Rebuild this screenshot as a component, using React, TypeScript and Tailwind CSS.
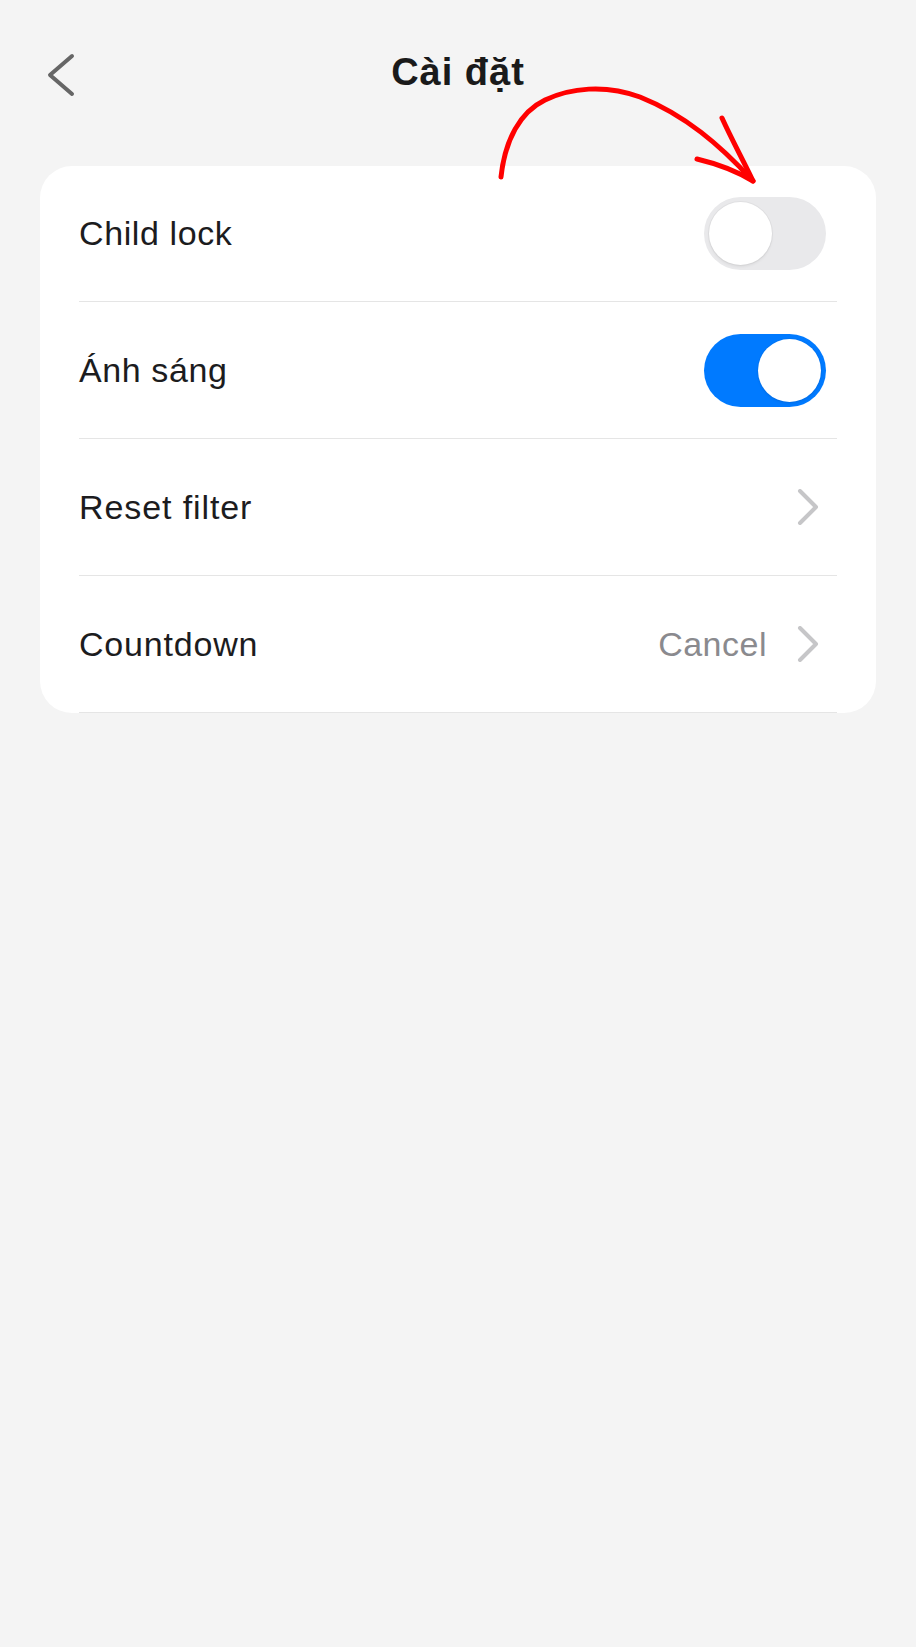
import { useState } from "react";

function Toggle({ on, onChange }: { on: boolean; onChange: () => void }) {
    return (
        <button
            type="button"
            onClick={onChange}
            className={`relative block w-[122px] h-[73px] rounded-full shrink-0 ${on ? "bg-[#007aff]" : "bg-[#e9e9eb]"}`}
        >
            <span
                className={`absolute top-[5px] w-[63px] h-[63px] rounded-full bg-white shadow-[0_0_0_1px_rgba(0,0,0,0.04),0_2px_3px_rgba(0,0,0,0.06)] ${on ? "left-[54px]" : "left-[5px]"}`}
            />
        </button>
    );
}

function Chevron() {
    return (
        <svg width="22" height="36" viewBox="0 0 22 36" className="block shrink-0">
            <polyline
                points="3,2 19,18 3,34"
                fill="none"
                stroke="#c6c6c8"
                strokeWidth="4"
                strokeLinecap="round"
                strokeLinejoin="round"
            />
        </svg>
    );
}

export default function App() {
    const [childLock, setChildLock] = useState(false);
    const [light, setLight] = useState(true);

    return (
        <div
            className="relative min-h-[1647px] w-full bg-[#f4f4f4] text-[#1c1c1e]"
            style={{ fontFamily: '"Liberation Sans", Arial, sans-serif' }}
        >
            {/* header */}
            <div className="relative flex items-center justify-center h-[144px]">
                <button type="button" className="absolute left-[45px] top-[53px]">
                    <svg width="32" height="44" viewBox="0 0 32 44" className="block">
                        <polyline
                            points="27,3 5,22 27,41"
                            fill="none"
                            stroke="#666666"
                            strokeWidth="4"
                            strokeLinecap="round"
                            strokeLinejoin="round"
                        />
                    </svg>
                </button>
                <h1 className="text-[38px] font-bold text-[#1a1a1a] tracking-[1px]">Cài đặt</h1>
            </div>

            {/* settings card */}
            <div className="mx-[40px] mt-[22px] bg-white rounded-[32px] px-[39px]">
                <div className="flex items-center justify-between h-[136px] border-b border-[#e5e5e5]">
                    <span className="text-[34px] tracking-[0.6px]">Child lock</span>
                    <div className="flex pr-[11px]">
                        <Toggle on={childLock} onChange={() => setChildLock(!childLock)} />
                    </div>
                </div>
                <div className="flex items-center justify-between h-[137px] border-b border-[#e5e5e5]">
                    <span className="text-[34px] tracking-[0.6px]">Ánh sáng</span>
                    <div className="flex pr-[11px]">
                        <Toggle on={light} onChange={() => setLight(!light)} />
                    </div>
                </div>
                <div className="flex items-center justify-between h-[137px] border-b border-[#e5e5e5]">
                    <span className="text-[34px] tracking-[0.9px]">Reset filter</span>
                    <div className="flex pr-[18px]">
                        <Chevron />
                    </div>
                </div>
                <div className="flex items-center justify-between h-[137px] border-b border-[#e5e5e5]">
                    <span className="text-[34px] tracking-[0.8px]">Countdown</span>
                    <div className="flex items-center gap-[30px] pr-[18px]">
                        <span className="text-[34px] text-[#8a8a8e] tracking-[0.5px]">Cancel</span>
                        <Chevron />
                    </div>
                </div>
            </div>

            {/* red hand-drawn annotation arrow */}
            <svg
                className="absolute left-0 top-0 pointer-events-none"
                width="916"
                height="260"
                viewBox="0 0 916 260"
            >
                <g fill="none" stroke="#ff0000" strokeWidth="5" strokeLinecap="round" strokeLinejoin="round">
                    <path d="M501 177 C 505 140, 520 112, 545 100 C 570 88, 605 84, 640 97 C 685 115, 720 145, 752 180" />
                    <path d="M722 118 C 732 140, 743 160, 753 181" />
                    <path d="M697 159 C 718 164, 738 172, 753 181" />
                </g>
            </svg>
        </div>
    );
}
